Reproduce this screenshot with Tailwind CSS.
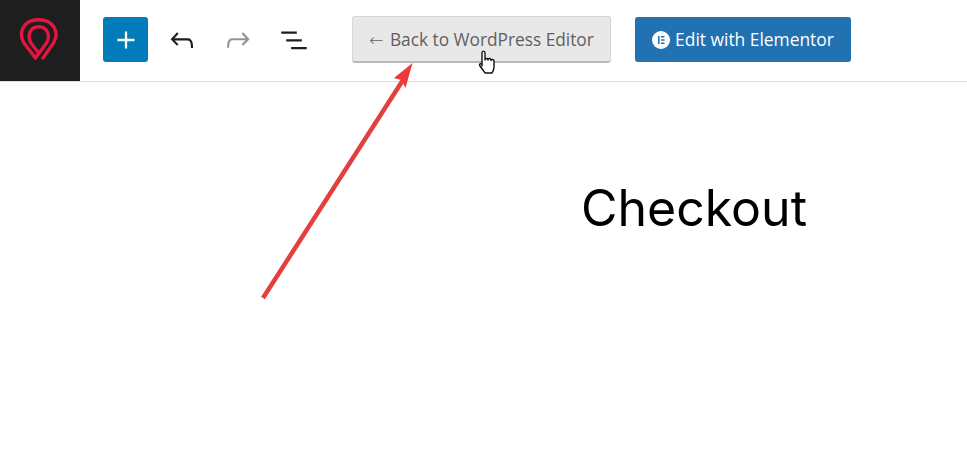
<!DOCTYPE html>
<html lang="en">
<head>
    <meta charset="UTF-8">
    <meta name="viewport" content="width=device-width, initial-scale=1.0">
    <title>Checkout</title>
    <script src="https://cdn.jsdelivr.net/npm/@tailwindcss/browser@4"></script>
</head>
<body class="relative h-[475px] w-[967px] overflow-hidden bg-white font-['Open_Sans',sans-serif]">
    <!-- Toolbar -->
    <header class="flex h-[82px] items-center border-b border-[#dcdcde] bg-white pb-[2px]">
        <div class="h-[81px] w-[80px] self-start bg-[#1e1e1e]">
            <svg class="block h-[81px] w-[80px]" viewBox="0 0 80 81" fill="none" stroke="#e3163f" stroke-width="3.400" stroke-linecap="round" stroke-linejoin="round">
                <path d="M35.500 58 24 43C18 33 23 19.800 38.700 19.800S59.500 33 53.500 43L43 58"/>
                <path d="M35.500 58 46.500 43C51 35 47 26.800 38.700 26.800S26.500 35 31 43L38.500 53"/>
            </svg>
        </div>
        <button class="ml-[23px] flex h-[45px] w-[45px] items-center justify-center rounded-[3px] bg-[#007cba]">
            <svg class="h-[34px] w-[34px] fill-white" viewBox="0 0 24 24"><path d="M18 11.200h-5.200V6h-1.600v5.200H6v1.600h5.200V18h1.600v-5.200H18z"/></svg>
        </button>
        <button class="ml-[17px]">
            <svg class="block h-[34px] w-[34px] fill-[#1e1e1e]" viewBox="0 0 24 24"><path d="M18.300 11.700c-.6-.6-1.400-.9-2.300-.9H6.700l2.900-3.300-1.100-1-4.500 5L8.500 16l1-1-2.700-2.700H16c.5 0 .9.200 1.300.5 1 1 1 3.400 1 4.500v.3h1.500v-.2c0-1.500 0-4.300-1.500-5.700z"/></svg>
        </button>
        <button class="ml-[22px]">
            <svg class="block h-[34px] w-[34px] fill-[#949494]" viewBox="0 0 24 24"><path d="M15.600 6.500l-1.100 1 2.900 3.300H8c-.9 0-1.700.3-2.300.9-1.400 1.500-1.400 4.200-1.400 5.600v.2h1.500v-.3c0-1.100 0-3.500 1-4.500.3-.3.7-.5 1.300-.5h9.200L14.500 15l1.100 1.100 4.600-4.600-4.600-5z"/></svg>
        </button>
        <button class="ml-[22px]">
            <svg class="block h-[34px] w-[34px] fill-[#1e1e1e]" viewBox="0 0 24 24"><path d="M3 6h11v1.500H3V6zm3.500 5.500h11V13h-11v-1.500zM21 17H10v1.500h11V17z"/></svg>
        </button>
        <button class="ml-[41px] h-[47px] w-[259px] rounded-[3px] border border-[#d5d5d5] border-b-[2px] border-b-[#b9b9b9] bg-[#e8e8e8] pt-[2px] text-[17.300px] text-[#5f5f5f]"><span class="mr-[2px] font-['DejaVu_Sans',sans-serif] text-[17px] font-extralight">←</span> Back to WordPress Editor</button>
        <button class="ml-[24px] flex h-[45px] w-[216px] items-center justify-center gap-[5px] rounded-[3px] bg-[#2271b1] text-[17.400px] font-medium text-white">
            <svg class="h-[18px] w-[18px]" viewBox="0 0 18 18">
                <circle cx="9" cy="9" r="9" fill="#fff"/>
                <path d="M6 5h1.600v8H6zM9 5h3.500v1.600H9zM9 8.200h3.500v1.600H9zM9 11.400h3.500V13H9z" fill="#2271b1"/>
            </svg>
            Edit with Elementor
        </button>
    </header>

    <!-- Page title -->
    <main class="flex justify-center pt-[94px] pl-[421px]">
        <h1 class="text-[50px] leading-[64px] font-normal text-black font-['Inter',sans-serif]">Checkout</h1>
    </main>

    <!-- Annotation arrow -->
    <svg class="absolute top-0 left-0 h-[475px] w-[967px]" viewBox="0 0 967 475" fill="none">
        <path d="M263 298 403 80" stroke="#e33f3f" stroke-width="4.500"/>
        <path d="M412.500 63 394 78 401.500 80 405.500 88Z" fill="#ec3a3a"/>
    </svg>

    <!-- Hand cursor -->
    <svg class="absolute top-[50px] left-[478px] h-[25px] w-[18px]" viewBox="0 0 18 25">
        <path d="M4 16V3c0-2.500 3-2.500 3 0v7c0-2 3-2 3 0 0-2 3-2 3 .5 0-1.500 3-1.500 3 .5v6c0 3-1 4-2 6H7c-1-2-3-4-5-7-1.500-2 1-3.500 2-1z" fill="#fff" stroke="#111" stroke-width="1.400" stroke-linejoin="round"/>
    </svg>
</body>
</html>
